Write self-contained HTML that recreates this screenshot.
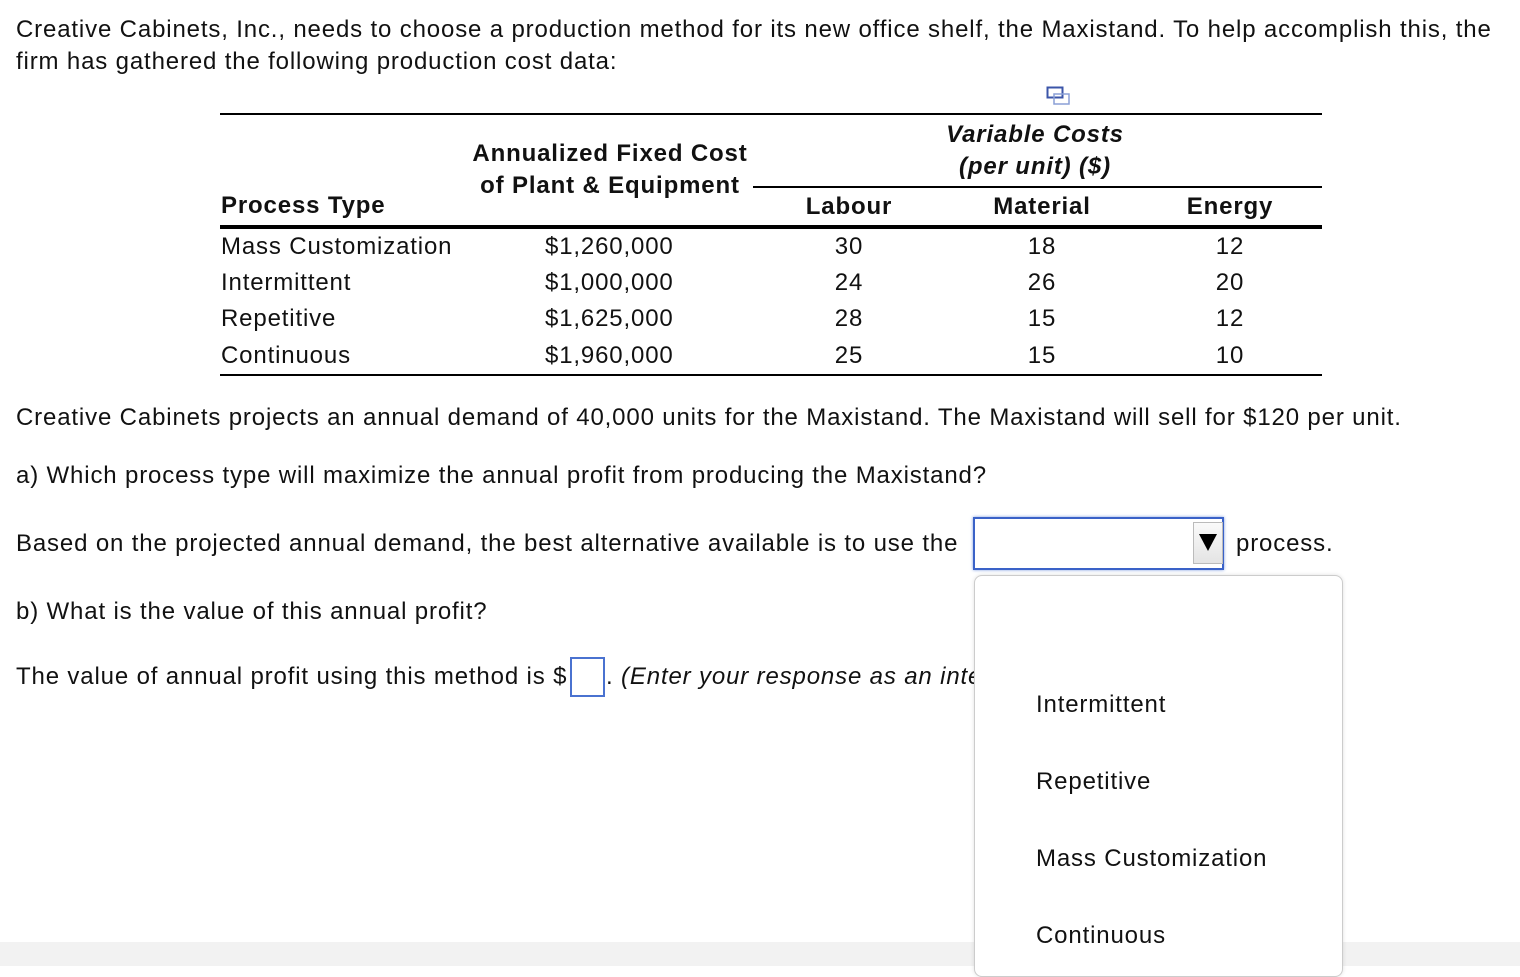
<!DOCTYPE html>
<html><head><style>
body{margin:0;width:1520px;height:966px;position:relative;overflow:hidden;background:#fff;font-family:"Liberation Sans",Arial,sans-serif;font-size:24px;color:#111;letter-spacing:0.85px;}
.a{position:absolute;white-space:nowrap;line-height:28px;}
.b{font-weight:bold}
.i{font-style:italic}
.c{text-align:center}
.hl{position:absolute;background:#000;}
</style></head><body>
<div class="a" style="left:16px;top:16px">Creative Cabinets, Inc., needs to choose a production method for its new office shelf, the Maxistand. To help accomplish this, the</div>
<div class="a" style="left:16px;top:48px">firm has gathered the following production cost data:</div>

<svg style="position:absolute;left:1046px;top:86px" width="26" height="22"><rect x="1.5" y="1.5" width="15" height="10" fill="#fff" stroke="#3b55a8" stroke-width="2"/><rect x="8" y="8" width="15" height="10" fill="none" stroke="#8a9fd6" stroke-width="1.5"/></svg>

<div class="hl" style="left:220px;top:113px;width:1102px;height:2px"></div>
<div class="hl" style="left:753px;top:186px;width:569px;height:2px"></div>
<div class="hl" style="left:220px;top:225px;width:1102px;height:4px"></div>
<div class="hl" style="left:220px;top:374px;width:1102px;height:2px"></div>

<div class="a b i c" style="left:880px;width:310px;top:121px">Variable Costs</div>
<div class="a b i c" style="left:880px;width:310px;top:153px">(per unit) ($)</div>
<div class="a b c" style="left:430px;width:360px;top:140px">Annualized Fixed Cost</div>
<div class="a b c" style="left:430px;width:360px;top:172px">of Plant &amp; Equipment</div>
<div class="a b" style="left:221px;top:192px">Process Type</div>
<div class="a b c" style="left:779px;width:140px;top:193px">Labour</div>
<div class="a b c" style="left:972px;width:140px;top:193px">Material</div>
<div class="a b c" style="left:1160px;width:140px;top:193px">Energy</div>

<div class="a" style="left:221px;top:233px">Mass Customization</div>
<div class="a" style="left:221px;top:269px">Intermittent</div>
<div class="a" style="left:221px;top:305px">Repetitive</div>
<div class="a" style="left:221px;top:342px">Continuous</div>
<div class="a" style="left:545px;top:233px">$1,260,000</div>
<div class="a" style="left:545px;top:269px">$1,000,000</div>
<div class="a" style="left:545px;top:305px">$1,625,000</div>
<div class="a" style="left:545px;top:342px">$1,960,000</div>
<div class="a c" style="left:779px;width:140px;top:233px">30</div>
<div class="a c" style="left:779px;width:140px;top:269px">24</div>
<div class="a c" style="left:779px;width:140px;top:305px">28</div>
<div class="a c" style="left:779px;width:140px;top:342px">25</div>
<div class="a c" style="left:972px;width:140px;top:233px">18</div>
<div class="a c" style="left:972px;width:140px;top:269px">26</div>
<div class="a c" style="left:972px;width:140px;top:305px">15</div>
<div class="a c" style="left:972px;width:140px;top:342px">15</div>
<div class="a c" style="left:1160px;width:140px;top:233px">12</div>
<div class="a c" style="left:1160px;width:140px;top:269px">20</div>
<div class="a c" style="left:1160px;width:140px;top:305px">12</div>
<div class="a c" style="left:1160px;width:140px;top:342px">10</div>

<div class="a" style="left:16px;top:404px">Creative Cabinets projects an annual demand of 40,000 units for the Maxistand. The Maxistand will sell for $120 per unit.</div>
<div class="a" style="left:16px;top:462px">a) Which process type will maximize the annual profit from producing the Maxistand?</div>
<div class="a" style="left:16px;top:530px">Based on the projected annual demand, the best alternative available is to use the</div>
<div style="position:absolute;left:973px;top:517px;width:247px;height:49px;border:2px solid #3a62c8;box-shadow:0 0 3px #7a9ae0;background:#fff"></div>
<div style="position:absolute;left:1193px;top:522px;width:28px;height:40px;border:1px solid #bbb;background:linear-gradient(#fafafa,#e4e4e4)"></div>
<svg style="position:absolute;left:1198px;top:532px" width="20" height="20"><polygon points="1,2 19,2 10,19" fill="#000"/></svg>
<div class="a" style="left:1236px;top:530px">process.</div>
<div class="a" style="left:16px;top:598px">b) What is the value of this annual profit?</div>
<div class="a" style="left:16px;top:663px">The value of annual profit using this method is $</div>
<div style="position:absolute;left:570px;top:657px;width:31px;height:36px;border:2px solid #4a72d0;background:#fff"></div>
<div class="a" style="left:606px;top:663px">. <span class="i">(Enter your response as an integer.)</span></div>

<div style="position:absolute;left:0;top:942px;width:1520px;height:24px;background:#f2f2f2"></div>
<div style="position:absolute;left:974px;top:575px;width:367px;height:400px;border:1px solid #ccc;border-radius:8px;background:#fff;box-shadow:0 0 4px rgba(0,0,0,.12)"></div>
<div class="a" style="left:1036px;top:691px">Intermittent</div>
<div class="a" style="left:1036px;top:768px">Repetitive</div>
<div class="a" style="left:1036px;top:845px">Mass Customization</div>
<div class="a" style="left:1036px;top:922px">Continuous</div>
</body></html>
